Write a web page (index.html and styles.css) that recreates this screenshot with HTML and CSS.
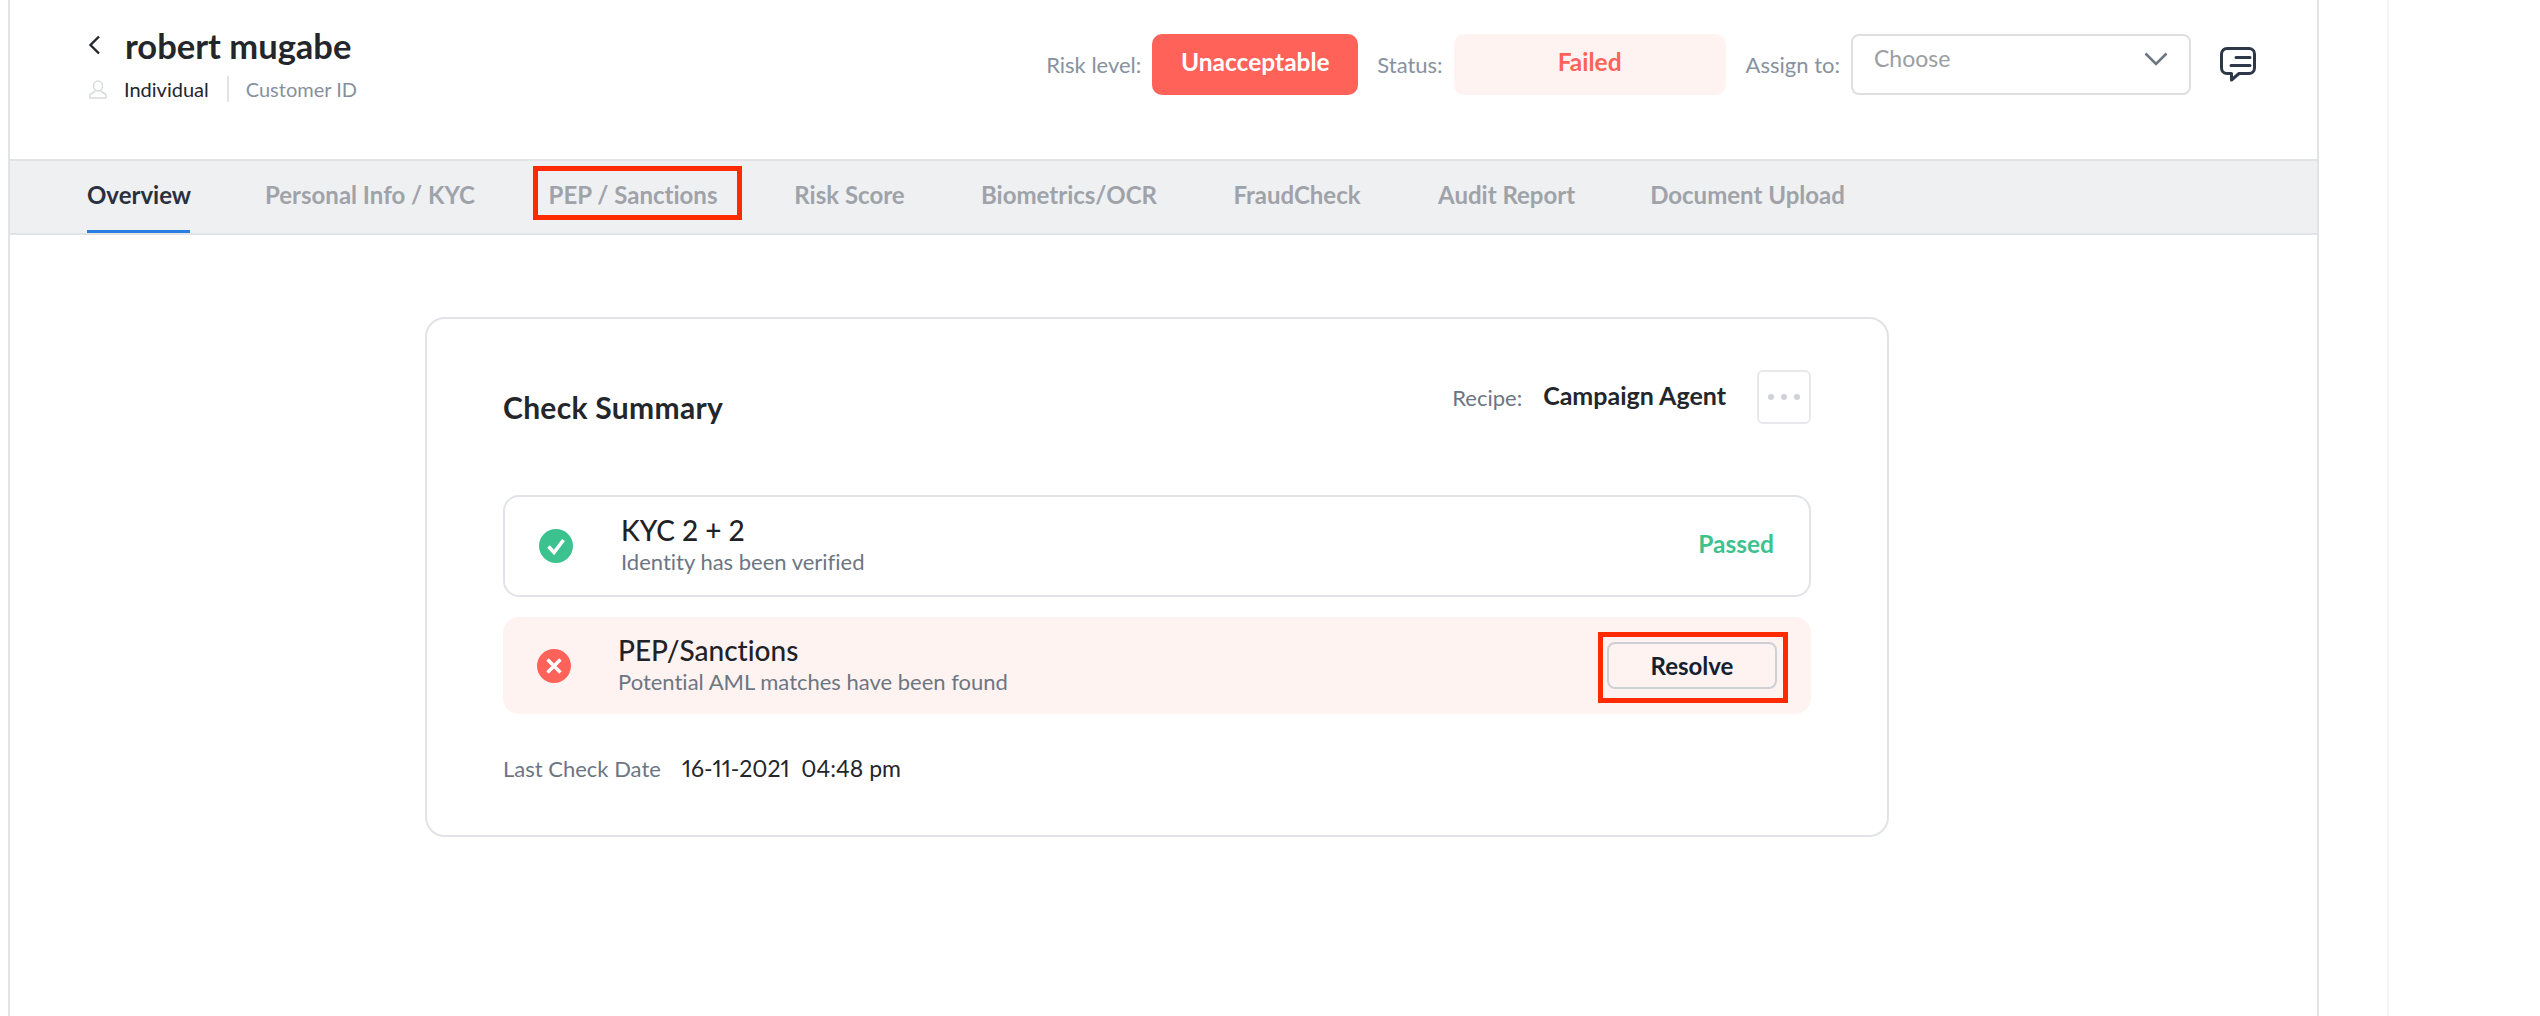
FILE: index.html
```html
<!DOCTYPE html>
<html>
  <head>
    <title>Customer Overview</title>
    <link rel="stylesheet" href="styles.css">
  </head>
  <body>
    <div class="page">
      <main class="main">
        <header class="top">
          <div class="who">
            <div class="who-name">
              <svg class="back" width="13" height="20" viewBox="0 0 13 20"><path d="M11 1.500 2.500 10l8.500 8.500" fill="none" stroke="#23262b" stroke-width="2.400"/></svg>
              <h1>robert mugabe</h1>
            </div>
            <div class="who-meta">
              <svg class="person" width="18" height="19" viewBox="0 0 18 19"><ellipse cx="9" cy="6" rx="4.500" ry="5" fill="none" stroke="#d8dadd" stroke-width="1.500"/><path d="M6.500 11 1 14.500V18h16v-3.500L11.500 11" fill="none" stroke="#d8dadd" stroke-width="1.500"/></svg>
              <span class="kind">Individual</span>
              <span class="cust">Customer ID</span>
            </div>
          </div>
          <div class="actions">
            <span class="lbl lbl-risk">Risk level:</span>
            <span class="badge badge-risk">Unacceptable</span>
            <span class="lbl lbl-status">Status:</span>
            <span class="badge badge-status">Failed</span>
            <span class="lbl lbl-assign">Assign to:</span>
            <div class="select">
              <span>Choose</span>
              <svg width="24" height="14" viewBox="0 0 24 14"><path d="M1.500 1.500 12 12 22.500 1.500" fill="none" stroke="#6c7680" stroke-width="2.600"/></svg>
            </div>
            <svg class="comment" width="36" height="36" viewBox="0 0 36 36"><path d="M7 1.500h22a5.500 5.500 0 0 1 5.500 5.500v14a5.500 5.500 0 0 1-5.500 5.500H19L11.500 33v-6.500H7A5.500 5.500 0 0 1 1.500 21V7A5.500 5.500 0 0 1 7 1.500Z" fill="none" stroke="#2d3748" stroke-width="3" stroke-linejoin="round"/><path d="M16 10.500h14M11 18.500h19" stroke="#2d3748" stroke-width="3" stroke-linecap="round"/></svg>
          </div>
        </header>

        <nav class="tabs">
          <a class="tab active">Overview</a>
          <a class="tab">Personal Info / KYC</a>
          <a class="tab marked-tab">PEP / Sanctions</a>
          <a class="tab">Risk Score</a>
          <a class="tab">Biometrics/OCR</a>
          <a class="tab">FraudCheck</a>
          <a class="tab">Audit Report</a>
          <a class="tab">Document Upload</a>
        </nav>

        <section class="card">
          <div class="card-head">
            <h2>Check Summary</h2>
            <div class="recipe">
              <span class="recipe-lbl">Recipe:</span>
              <span class="recipe-val">Campaign Agent</span>
              <button class="more"><i></i><i></i><i></i></button>
            </div>
          </div>

          <div class="check check-ok">
            <svg class="check-icon" width="34" height="34" viewBox="0 0 34 34"><circle cx="17" cy="17" r="17" fill="#3cc28f"/><path d="M9.500 17.500 15 23.500 24.500 11" fill="none" stroke="#fff" stroke-width="3.600"/></svg>
            <div class="check-text">
              <div class="check-title">KYC 2 + 2</div>
              <div class="check-sub">Identity has been verified</div>
            </div>
            <span class="passed">Passed</span>
          </div>

          <div class="check check-bad">
            <svg class="check-icon" width="34" height="34" viewBox="0 0 34 34"><circle cx="17" cy="17" r="17" fill="#ff6259"/><path d="M10.500 10.500 23.500 23.500M23.500 10.500 10.500 23.500" fill="none" stroke="#fff" stroke-width="3.400"/></svg>
            <div class="check-text">
              <div class="check-title">PEP/Sanctions</div>
              <div class="check-sub">Potential AML matches have been found</div>
            </div>
            <button class="resolve">Resolve</button>
          </div>

          <div class="last-check">
            <span class="last-lbl">Last Check Date</span>
            <span class="last-val">16-11-2021&nbsp; 04:48 pm</span>
          </div>
        </section>
      </main>
      <aside class="side"></aside>
    </div>
  </body>
</html>
```

FILE: styles.css
```css
*, *::after {
  box-sizing: border-box;
}

body {
  margin: 0;
  font-family: Lato, "Open Sans", sans-serif;
  font-variant-ligatures: none;
  background-color: #fff;
  color: #23262b;
}

.page {
  display: flex;
  height: 1016px;
  overflow: hidden;
  padding-left: 8px;
}

.main {
  width: 2311px;
  border-left: 2px solid #e2e3e6;
  border-right: 2px solid #e2e3e6;
}

.side {
  width: 70px;
  border-right: 2px solid #f6f6f7;
}

/* header */
.top {
  display: flex;
  justify-content: space-between;
  height: 159px;
  padding: 25px 61px 0 77px;
}

.who-name {
  display: flex;
  align-items: center;
  height: 44px;
}

.back {
  margin: -4px 24px 0 1px;
}

h1 {
  margin: -3px 0 0;
  font-size: 34.500px;
  font-weight: 700;
}

.who-meta {
  display: flex;
  align-items: center;
  height: 26px;
  margin-top: 7px;
}

.person {
  margin: 0 17px 0 2px;
}

.kind {
  font-size: 20px;
  padding-right: 18px;
  border-right: 2px solid #e2e3e6;
  line-height: 26px;
}

.cust {
  font-size: 20px;
  padding-left: 17px;
  color: #86909c;
}

.actions {
  display: flex;
  align-items: flex-start;
  padding-top: 9px;
}

.lbl {
  font-size: 22px;
  line-height: 61px;
  color: #86929e;
}

.lbl-risk {
  margin-right: 11px;
}

.lbl-status {
  margin: 0 11px 0 19px;
}

.lbl-assign {
  margin: 0 11px 0 20px;
}

.badge {
  height: 61px;
  border-radius: 10px;
  text-align: center;
  font-size: 24.500px;
  font-weight: 700;
  line-height: 56px;
}

.badge-risk {
  width: 206px;
  background-color: #ff6259;
  color: #fff;
}

.badge-status {
  width: 272px;
  background-color: #fff3f2;
  color: #ff6259;
}

.select {
  display: flex;
  justify-content: space-between;
  width: 340px;
  height: 61px;
  padding: 8px 21px 0 21px;
  border: 2px solid #dedfe1;
  border-radius: 8px;
  font-size: 23px;
  color: #9b9ea2;
}

.select svg {
  margin-top: 8px;
}

.comment {
  margin: 13px 0 0 29px;
  height: 36px;
}

/* tabs */
.tabs {
  display: grid;
  grid-template-columns: 103px 208px 170px 113px 175px 132px 136px 197px;
  gap: 75px;
  height: 76px;
  padding: 0 77px;
  background-color: #eff0f2;
  border-top: 2px solid #e2e3e6;
  border-bottom: 2px solid #e2e3e6;
}

.tab {
  position: relative;
  height: 72px;
  line-height: 68px;
  text-align: center;
  white-space: nowrap;
  font-size: 24px;
  font-weight: 700;
  color: #9fa3a9;
}

.tab.active {
  color: #2a3040;
  border-bottom: 3px solid #2a7de1;
}

.marked-tab::after {
  content: "";
  position: absolute;
  top: 5px;
  left: -15px;
  right: -24px;
  height: 54px;
  border: 5px solid #ff2a00;
}

/* card */
.card {
  width: 1464px;
  height: 520px;
  margin: 82px 0 0 415px;
  padding: 51px 76px 0;
  border: 2px solid #e2e3e8;
  border-radius: 20px;
}

.card-head {
  display: flex;
  justify-content: space-between;
  height: 54px;
  margin-bottom: 71px;
}

h2 {
  margin: 20px 0 0;
  font-size: 30px;
  font-weight: 700;
  letter-spacing: 0.300px;
  color: #23262b;
  line-height: 34px;
}

.recipe {
  display: flex;
  align-items: center;
}

.recipe-lbl {
  font-size: 22px;
  color: #6c7683;
  margin-right: 21px;
}

.recipe-val {
  font-size: 25px;
  font-weight: 700;
  margin: -4px 31px 0 0;
}

.more {
  display: flex;
  align-items: center;
  justify-content: center;
  gap: 7px;
  width: 54px;
  height: 54px;
  padding: 0;
  background: #fff;
  border: 2px solid #e8e9ed;
  border-radius: 6px;
}

.more i {
  width: 6px;
  height: 6px;
  border-radius: 50%;
  background-color: #d0d2d8;
}

.check {
  display: flex;
  align-items: center;
  border-radius: 16px;
}

.check-ok {
  height: 102px;
  padding: 0 35px 0 34px;
  border: 2px solid #e2e3e8;
}

.check-bad {
  position: relative;
  height: 97px;
  margin-top: 20px;
  padding: 0 34px 0 34px;
  background-color: #fff3f2;
}

.check-icon {
  flex: none;
}

.check-ok .check-text {
  margin-left: 48px;
}

.check-bad .check-text {
  margin-left: 47px;
}

.check-text {
  flex: 1;
}

.check-title {
  font-size: 28px;
  line-height: 32px;
  font-weight: 500;
  color: #1f2226;
}

.check-sub {
  font-size: 22px;
  line-height: 32px;
  color: #6c7683;
}

.passed {
  margin-top: -5px;
  font-size: 24.500px;
  font-weight: 700;
  color: #3cc28f;
}

.resolve {
  position: relative;
  width: 170px;
  height: 47px;
  padding: 0;
  background: transparent;
  border: 2px solid #cfd0d6;
  border-radius: 8px;
  font-family: inherit;
  font-size: 24px;
  font-weight: 700;
  color: #14202e;
}

.resolve::after {
  content: "";
  position: absolute;
  top: -12px;
  left: -11px;
  width: 190px;
  height: 71px;
  border: 5px solid #ff2a00;
}

.last-check {
  display: flex;
  align-items: center;
  height: 32px;
  margin-top: 38px;
}

.last-lbl {
  font-size: 22px;
  color: #6c7683;
  margin-right: 21px;
}

.last-val {
  font-size: 23px;
  font-variant-numeric: proportional-nums;
  color: #23262b;
}
```
